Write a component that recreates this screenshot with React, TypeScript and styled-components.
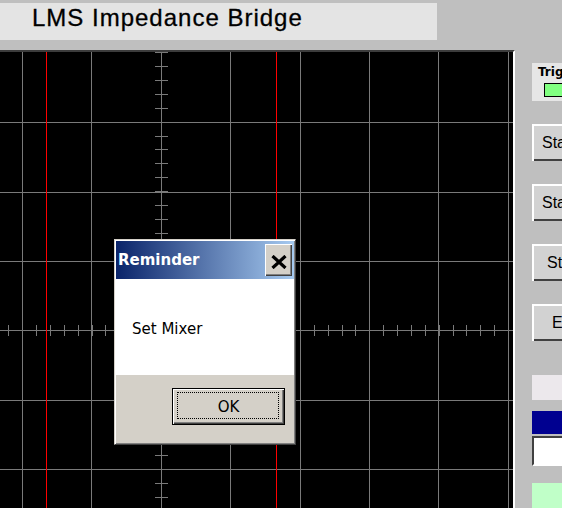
import styled, { createGlobalStyle } from "styled-components";

const GlobalStyle = createGlobalStyle`
  html, body {
    margin: 0;
    padding: 0;
    background: #bfbfbf;
    overflow: hidden;
  }
  body {
    font-family: "Liberation Sans", Arial, sans-serif;
  }
`;

// scope geometry, in pixels inside the black plot area
const SCOPE_W = 513;
const SCOPE_H = 456;
const SUB = 69.43 / 5;
const CENTER_X = 161;
const CENTER_Y = 278;
const GRID_X = [22, 91, 161, 230, 300, 369, 438, 508];
const GRID_Y = [70, 140, 209, 278, 348, 417];
const CURSORS = [46, 276];

const Page = styled.div`
  position: relative;
  width: 562px;
  height: 508px;
  overflow: hidden;
  display: flex;
  flex-direction: column;
  background: #bfbfbf;
`;

const Header = styled.header`
  flex: none;
  height: 50px;
  padding-top: 3px;
  box-sizing: border-box;
`;

const TitlePanel = styled.h1`
  margin: 0;
  width: 437px;
  height: 37px;
  box-sizing: border-box;
  padding-left: 32px;
  background: #e4e4e4;
  font-size: 24px;
  font-weight: normal;
  line-height: 30px;
  letter-spacing: 1px;
  color: #000;
  white-space: nowrap;
  -webkit-text-stroke: 0.3px #000;
`;

const Main = styled.main`
  flex: 1;
  min-height: 0;
  display: flex;
`;

const ScopeFrame = styled.div`
  flex: none;
  width: 515px;
  box-sizing: border-box;
  border-top: 2px solid #3c3c3c;
  border-right: 2px solid #ffffff;
  background: #000;
  overflow: hidden;
`;

const SidePanel = styled.aside`
  flex: 1;
  min-width: 0;
  display: flex;
  flex-direction: column;
  align-items: flex-start;
  padding-left: 17px;
  overflow: hidden;
`;

const TrigBox = styled.div`
  flex: none;
  width: 90px;
  height: 38px;
  margin-top: 13px;
  box-sizing: border-box;
  padding: 2px 0 0 6px;
  background: #e6e6e6;
`;

const TrigLabel = styled.div`
  font-family: "DejaVu Sans", sans-serif;
  font-weight: bold;
  font-size: 12px;
  line-height: 14px;
  white-space: nowrap;
`;

const TrigLamp = styled.div`
  width: 40px;
  height: 14px;
  margin: 4px 0 0 6px;
  box-sizing: border-box;
  border: 1px solid #000;
  background: #80ff80;
`;

const SideButton = styled.button<{ $indent: number }>`
  flex: none;
  width: 90px;
  height: 37px;
  margin-top: 23px;
  padding: 0 0 0 ${({ $indent }) => $indent}px;
  border: none;
  background: #d2d2d2;
  box-shadow: inset 2px 2px #ffffff, inset -2px -2px #404040;
  font-family: "Liberation Sans", Arial, sans-serif;
  font-size: 16px;
  text-align: left;
  white-space: nowrap;
  color: #000;
`;

const Swatch = styled.div<{ $color: string; $top: number; $height: number }>`
  flex: none;
  width: 90px;
  height: ${({ $height }) => $height}px;
  margin-top: ${({ $top }) => $top}px;
  background: ${({ $color }) => $color};
`;

const ValueField = styled.div`
  flex: none;
  width: 90px;
  height: 30px;
  margin-top: 2px;
  box-sizing: border-box;
  background: #fff;
  border: 2px solid;
  border-color: #404040 #ffffff #ffffff #404040;
`;

const Dialog = styled.div`
  position: absolute;
  left: 114px;
  top: 239px;
  width: 182px;
  height: 206px;
  box-sizing: border-box;
  padding: 1px;
  display: flex;
  flex-direction: column;
  background: #d4d0c8;
  border: 1px solid;
  border-color: #d4d0c8 #404040 #404040 #d4d0c8;
  box-shadow: inset 1px 1px #ffffff, inset -1px -1px #808080;
`;

const TitleBar = styled.div`
  flex: none;
  height: 38px;
  display: flex;
  align-items: center;
  justify-content: space-between;
  padding: 0 2px;
  background: linear-gradient(to right, #0a246a, #a6caf0);
`;

const TitleText = styled.span`
  font-family: "DejaVu Sans", sans-serif;
  font-weight: bold;
  font-size: 15px;
  color: #fff;
`;

const CloseButton = styled.button`
  width: 27px;
  height: 32px;
  padding: 3px 0 0;
  border: none;
  display: flex;
  align-items: center;
  justify-content: center;
  background: #d4d0c8;
  box-shadow: inset 1px 1px #ffffff, inset -1px -1px #404040,
    inset -2px -2px #808080;
`;

const DialogBody = styled.div`
  flex: none;
  height: 96px;
  box-sizing: border-box;
  padding: 41px 0 0 16px;
  background: #fff;
  font-family: "DejaVu Sans", sans-serif;
  font-size: 15px;
  line-height: 18px;
  color: #000;
`;

const DialogFooter = styled.div`
  flex: 1;
  padding: 13px 0 0 56px;
`;

const OkButton = styled.button`
  position: relative;
  width: 113px;
  height: 37px;
  padding: 0;
  border: 1px solid #000;
  background: #d4d0c8;
  box-shadow: inset 1px 1px #ffffff, inset -1px -1px #404040,
    inset -2px -2px #808080;
  font-family: "DejaVu Sans", sans-serif;
  font-size: 15px;
  color: #000;

  &::after {
    content: "";
    position: absolute;
    inset: 3px 5px 5px 4px;
    border: 1px dotted #000;
  }
`;

const CloseIcon = () => (
  <svg width="16" height="14" viewBox="0 0 16 14">
    <path d="M1.5 1 L14.5 13 M14.5 1 L1.5 13" stroke="#000" strokeWidth="3.2" />
  </svg>
);

const ticks = (center: number, limit: number) => {
  const out: number[] = [];
  for (let j = -40; j <= 40; j++) {
    const v = Math.round(center + j * SUB);
    if (v >= 0 && v <= limit) out.push(v + 0.5);
  }
  return out;
};

const ScopeGrid = () => (
  <svg width={SCOPE_W} height={SCOPE_H} style={{ display: "block" }}>
    <g stroke="#7a7a7a" strokeWidth="1">
      {GRID_X.map((x) => (
        <line key={"v" + x} x1={x + 0.5} y1={0} x2={x + 0.5} y2={SCOPE_H} />
      ))}
      {GRID_Y.map((y) => (
        <line key={"h" + y} x1={0} y1={y + 0.5} x2={SCOPE_W} y2={y + 0.5} />
      ))}
      {ticks(CENTER_X, 508).map((x) => (
        <line key={"tx" + x} x1={x} y1={CENTER_Y - 5} x2={x} y2={CENTER_Y + 6} />
      ))}
      {ticks(CENTER_Y, SCOPE_H).map((y) => (
        <line key={"ty" + y} x1={CENTER_X - 6} y1={y} x2={CENTER_X + 7} y2={y} />
      ))}
    </g>
    <g stroke="#ff0000" strokeWidth="1">
      {CURSORS.map((x) => (
        <line key={"c" + x} x1={x + 0.5} y1={0} x2={x + 0.5} y2={SCOPE_H} />
      ))}
    </g>
  </svg>
);

export default function App() {
  return (
    <Page>
      <GlobalStyle />
      <Header>
        <TitlePanel>LMS Impedance Bridge</TitlePanel>
      </Header>
      <Main>
        <ScopeFrame>
          <ScopeGrid />
        </ScopeFrame>
        <SidePanel>
          <TrigBox>
            <TrigLabel>Trigger</TrigLabel>
            <TrigLamp />
          </TrigBox>
          <SideButton $indent={10}>Start</SideButton>
          <SideButton $indent={10}>Start</SideButton>
          <SideButton $indent={15}>Stop</SideButton>
          <SideButton $indent={20}>Exit</SideButton>
          <Swatch $color="#ece8ec" $top={34} $height={25} />
          <Swatch $color="#000090" $top={11} $height={23} />
          <ValueField />
          <Swatch $color="#c0ffc8" $top={17} $height={40} />
        </SidePanel>
      </Main>
      <Dialog>
        <TitleBar>
          <TitleText>Reminder</TitleText>
          <CloseButton>
            <CloseIcon />
          </CloseButton>
        </TitleBar>
        <DialogBody>Set Mixer</DialogBody>
        <DialogFooter>
          <OkButton>OK</OkButton>
        </DialogFooter>
      </Dialog>
    </Page>
  );
}
